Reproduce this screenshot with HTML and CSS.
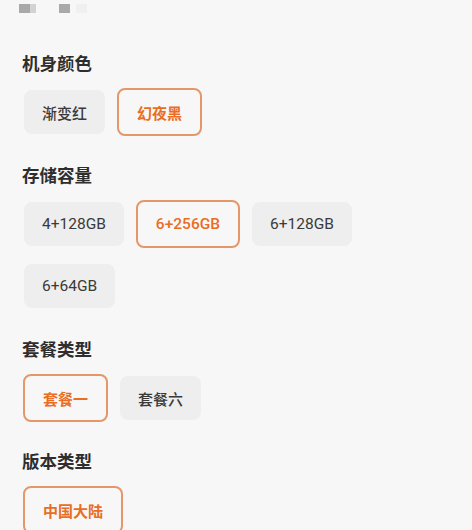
FILE: index.html
```html
<!DOCTYPE html>
<html lang="zh">
<head>
<meta charset="utf-8">
<link rel="stylesheet" href="styles.css">
</head>
<body>
<div class="page">
  <div class="topbar">
    <span class="blk dark"></span><span class="blk light"></span>
    <span class="blk dark gap"></span><span class="blk faint"></span>
  </div>

  <section class="section">
    <h3 class="title">机身颜色</h3>
    <div class="chips">
      <span class="chip">渐变红</span>
      <span class="chip on">幻夜黑</span>
    </div>
  </section>

  <section class="section">
    <h3 class="title">存储容量</h3>
    <div class="chips">
      <span class="chip num">4+128GB</span>
      <span class="chip num on">6+256GB</span>
      <span class="chip num">6+128GB</span>
      <span class="chip num">6+64GB</span>
    </div>
  </section>

  <section class="section">
    <h3 class="title">套餐类型</h3>
    <div class="chips">
      <span class="chip on">套餐一</span>
      <span class="chip">套餐六</span>
    </div>
  </section>

  <section class="section">
    <h3 class="title">版本类型</h3>
    <div class="chips">
      <span class="chip on">中国大陆</span>
    </div>
  </section>
</div>
</body>
</html>
```

FILE: styles.css
```css
html, body {
  margin: 0;
  padding: 0;
  background: #f7f7f7;
}
body {
  font-family: "Noto Sans CJK SC", "Noto Sans", sans-serif;
  color: #333;
  width: 472px;
  height: 530px;
  overflow: hidden;
}
.page {
  padding: 4px 22px 0 22px;
}
.topbar {
  display: flex;
  height: 9px;
  margin-left: -3px;
}
.blk {
  display: block;
  width: 11px;
  height: 9px;
  background: #a9a9a9;
  filter: blur(0.6px);
}
.blk.light {
  width: 6px;
  background: #d2d2d2;
}
.blk.gap {
  margin-left: 23px;
}
.blk.faint {
  margin-left: 6px;
  background: #f0f0f0;
}
.section {
  margin-top: 38px;
}
.section + .section {
  margin-top: 29px;
}
.title {
  margin: 0 0 15px 0;
  font-size: 17.5px;
  line-height: 24px;
  font-weight: 700;
  color: #2e2e2e;
}
.chips {
  display: flex;
  flex-wrap: wrap;
  column-gap: 13px;
  row-gap: 18px;
  padding-left: 2px;
}
.chip {
  box-sizing: border-box;
  height: 44px;
  padding: 0 18px;
  display: flex;
  align-items: center;
  justify-content: center;
  border-radius: 8px;
  background: #eeeeee;
  font-size: 15px;
  color: #3a3a3a;
  font-weight: 500;
}
.chip.num {
  font-family: "Roboto", "Noto Sans", sans-serif;
  font-weight: 400;
  font-size: 15.5px;
}
.chip.on {
  background: transparent;
  border: 2px solid #e5976a;
  color: #ea6d24;
  font-weight: 700;
  margin: -2px -1px;
  height: 48px;
}
.chip.num.on {
  font-weight: 500;
}
```
